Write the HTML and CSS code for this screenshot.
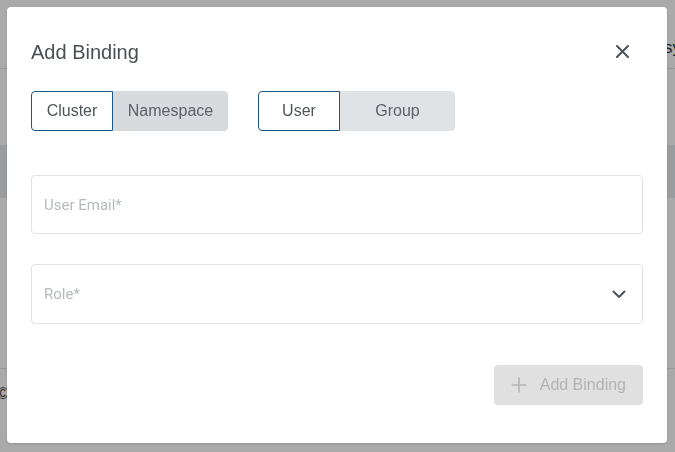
FILE: index.html
```html
<!DOCTYPE html>
<html lang="en">
<head>
<meta charset="utf-8">
<title>Add Binding</title>
<link rel="stylesheet" href="styles.css">
</head>
<body>
<div class="page">
  <header class="page-header">
    <div class="page-header-spacer"></div>
    <span class="page-header-user">system</span>
  </header>
  <div class="page-toolbar"></div>
  <div class="page-band"></div>
  <div class="page-content"></div>
  <footer class="page-footer">©</footer>
</div>

<div class="overlay">
  <div class="modal" role="dialog" aria-labelledby="modal-title">
    <div class="modal-header">
      <h2 class="modal-title" id="modal-title">Add Binding</h2>
      <button class="close-btn" type="button" aria-label="Close">
        <svg width="13" height="13" viewBox="0 0 13 13"><path d="M1 1 L12 12 M12 1 L1 12" stroke="#4a535d" stroke-width="2" stroke-linecap="round" fill="none"/></svg>
      </button>
    </div>

    <div class="toggle-row">
      <div class="toggle-group">
        <button class="toggle toggle-first is-active" type="button">Cluster</button>
        <button class="toggle toggle-second toggle-dark" type="button">Namespace</button>
      </div>
      <div class="toggle-group">
        <button class="toggle toggle-first is-active" type="button">User</button>
        <button class="toggle toggle-second" type="button">Group</button>
      </div>
    </div>

    <div class="field field-email">
      <span class="placeholder">User Email*</span>
    </div>

    <div class="field field-role">
      <span class="placeholder">Role*</span>
      <svg class="chevron" width="14" height="9" viewBox="0 0 14 9"><path d="M1.5 1.5 L7 7 L12.5 1.5" stroke="#4a535d" stroke-width="2" fill="none" stroke-linecap="round" stroke-linejoin="round"/></svg>
    </div>

    <div class="modal-footer">
      <button class="add-btn" type="button" disabled>
        <svg width="16" height="16" viewBox="0 0 16 16"><path d="M8 0.5 V15.5 M0.5 8 H15.5" stroke="#b4b4b4" stroke-width="1.6" fill="none"/></svg>
        <span>Add Binding</span>
      </button>
    </div>
  </div>
</div>
</body>
</html>
```

FILE: styles.css
```css
* { box-sizing: border-box; }

html, body {
  margin: 0;
  padding: 0;
  height: 100%;
  overflow: hidden;
}

body {
  font-family: "Liberation Sans", Arial, sans-serif;
  background: #ffffff;
  color: #333;
}

/* background page */
.page {
  width: 675px;
  height: 452px;
}

.page-header {
  height: 69px;
  display: flex;
  align-items: center;
  border-bottom: 1px solid #e3e3e3;
  white-space: nowrap;
  overflow: hidden;
  padding-top: 27px;
}

.page-header-spacer {
  flex: 0 0 664px;
}

.page-header-user {
  font-size: 17px;
  color: #24364a;
}

.page-toolbar {
  height: 76px;
}

.page-band {
  height: 53px;
  background: #e9ebee;
}

.page-content {
  height: 171px;
  border-bottom: 1px solid #e3e3e3;
}

.page-footer {
  padding-top: 16px;
  font-size: 16px;
  color: #333;
  margin-left: -3px;
}

/* overlay + modal */
.overlay {
  position: fixed;
  inset: 0;
  background: rgba(0, 0, 0, 0.335);
  display: flex;
  align-items: flex-start;
  justify-content: flex-start;
  padding: 7px 0 0 7px;
}

.modal {
  width: 660px;
  background: #ffffff;
  border-radius: 4px;
  padding: 31px 24px 38px 24px;
  box-shadow: 0 1px 3px rgba(0, 0, 0, 0.15);
}

.modal-header {
  display: flex;
  align-items: center;
  justify-content: space-between;
  height: 28px;
}

.modal-title {
  margin: 0;
  font-size: 20px;
  font-weight: normal;
  line-height: 28px;
  color: #4a4f55;
}

.close-btn {
  border: 0;
  background: none;
  padding: 0;
  margin: 0 14px 2px 0;
  width: 13px;
  height: 13px;
  display: flex;
  cursor: pointer;
}

.toggle-row {
  display: flex;
  gap: 30px;
  margin-top: 25px;
}

.toggle-group {
  display: flex;
}

.toggle {
  height: 40px;
  font-family: "Liberation Sans", Arial, sans-serif;
  font-size: 16px;
  padding: 0;
  border: 1px solid transparent;
  background: #e0e3e6;
  color: #5d6166;
  cursor: pointer;
}

.toggle-first {
  width: 82px;
  border-radius: 4px 0 0 4px;
}

.toggle-second {
  width: 115px;
  border-radius: 0 4px 4px 0;
}

.toggle-dark {
  background: #d8dbde;
}

.toggle.is-active {
  background: #ffffff;
  border-color: #1d5682;
  color: #4f5459;
}

.field {
  display: flex;
  align-items: center;
  justify-content: space-between;
  border: 1px solid #e0e2e4;
  border-radius: 4px;
  padding: 0 16px 0 12px;
}

.field-email {
  margin-top: 44px;
  height: 59px;
}

.field-role {
  margin-top: 30px;
  height: 60px;
}

.placeholder {
  font-family: Roboto, "Liberation Sans", sans-serif;
  font-size: 15px;
  color: #b6babf;
}

.chevron {
  display: block;
}

.modal-footer {
  display: flex;
  justify-content: flex-end;
  margin-top: 41px;
}

.add-btn {
  display: flex;
  align-items: center;
  gap: 13px;
  height: 40px;
  padding: 0 17px;
  border: 0;
  border-radius: 4px;
  background: #e0e0e0;
  color: #b3b3b3;
  font-family: "Liberation Sans", Arial, sans-serif;
  font-size: 16px;
}
```
